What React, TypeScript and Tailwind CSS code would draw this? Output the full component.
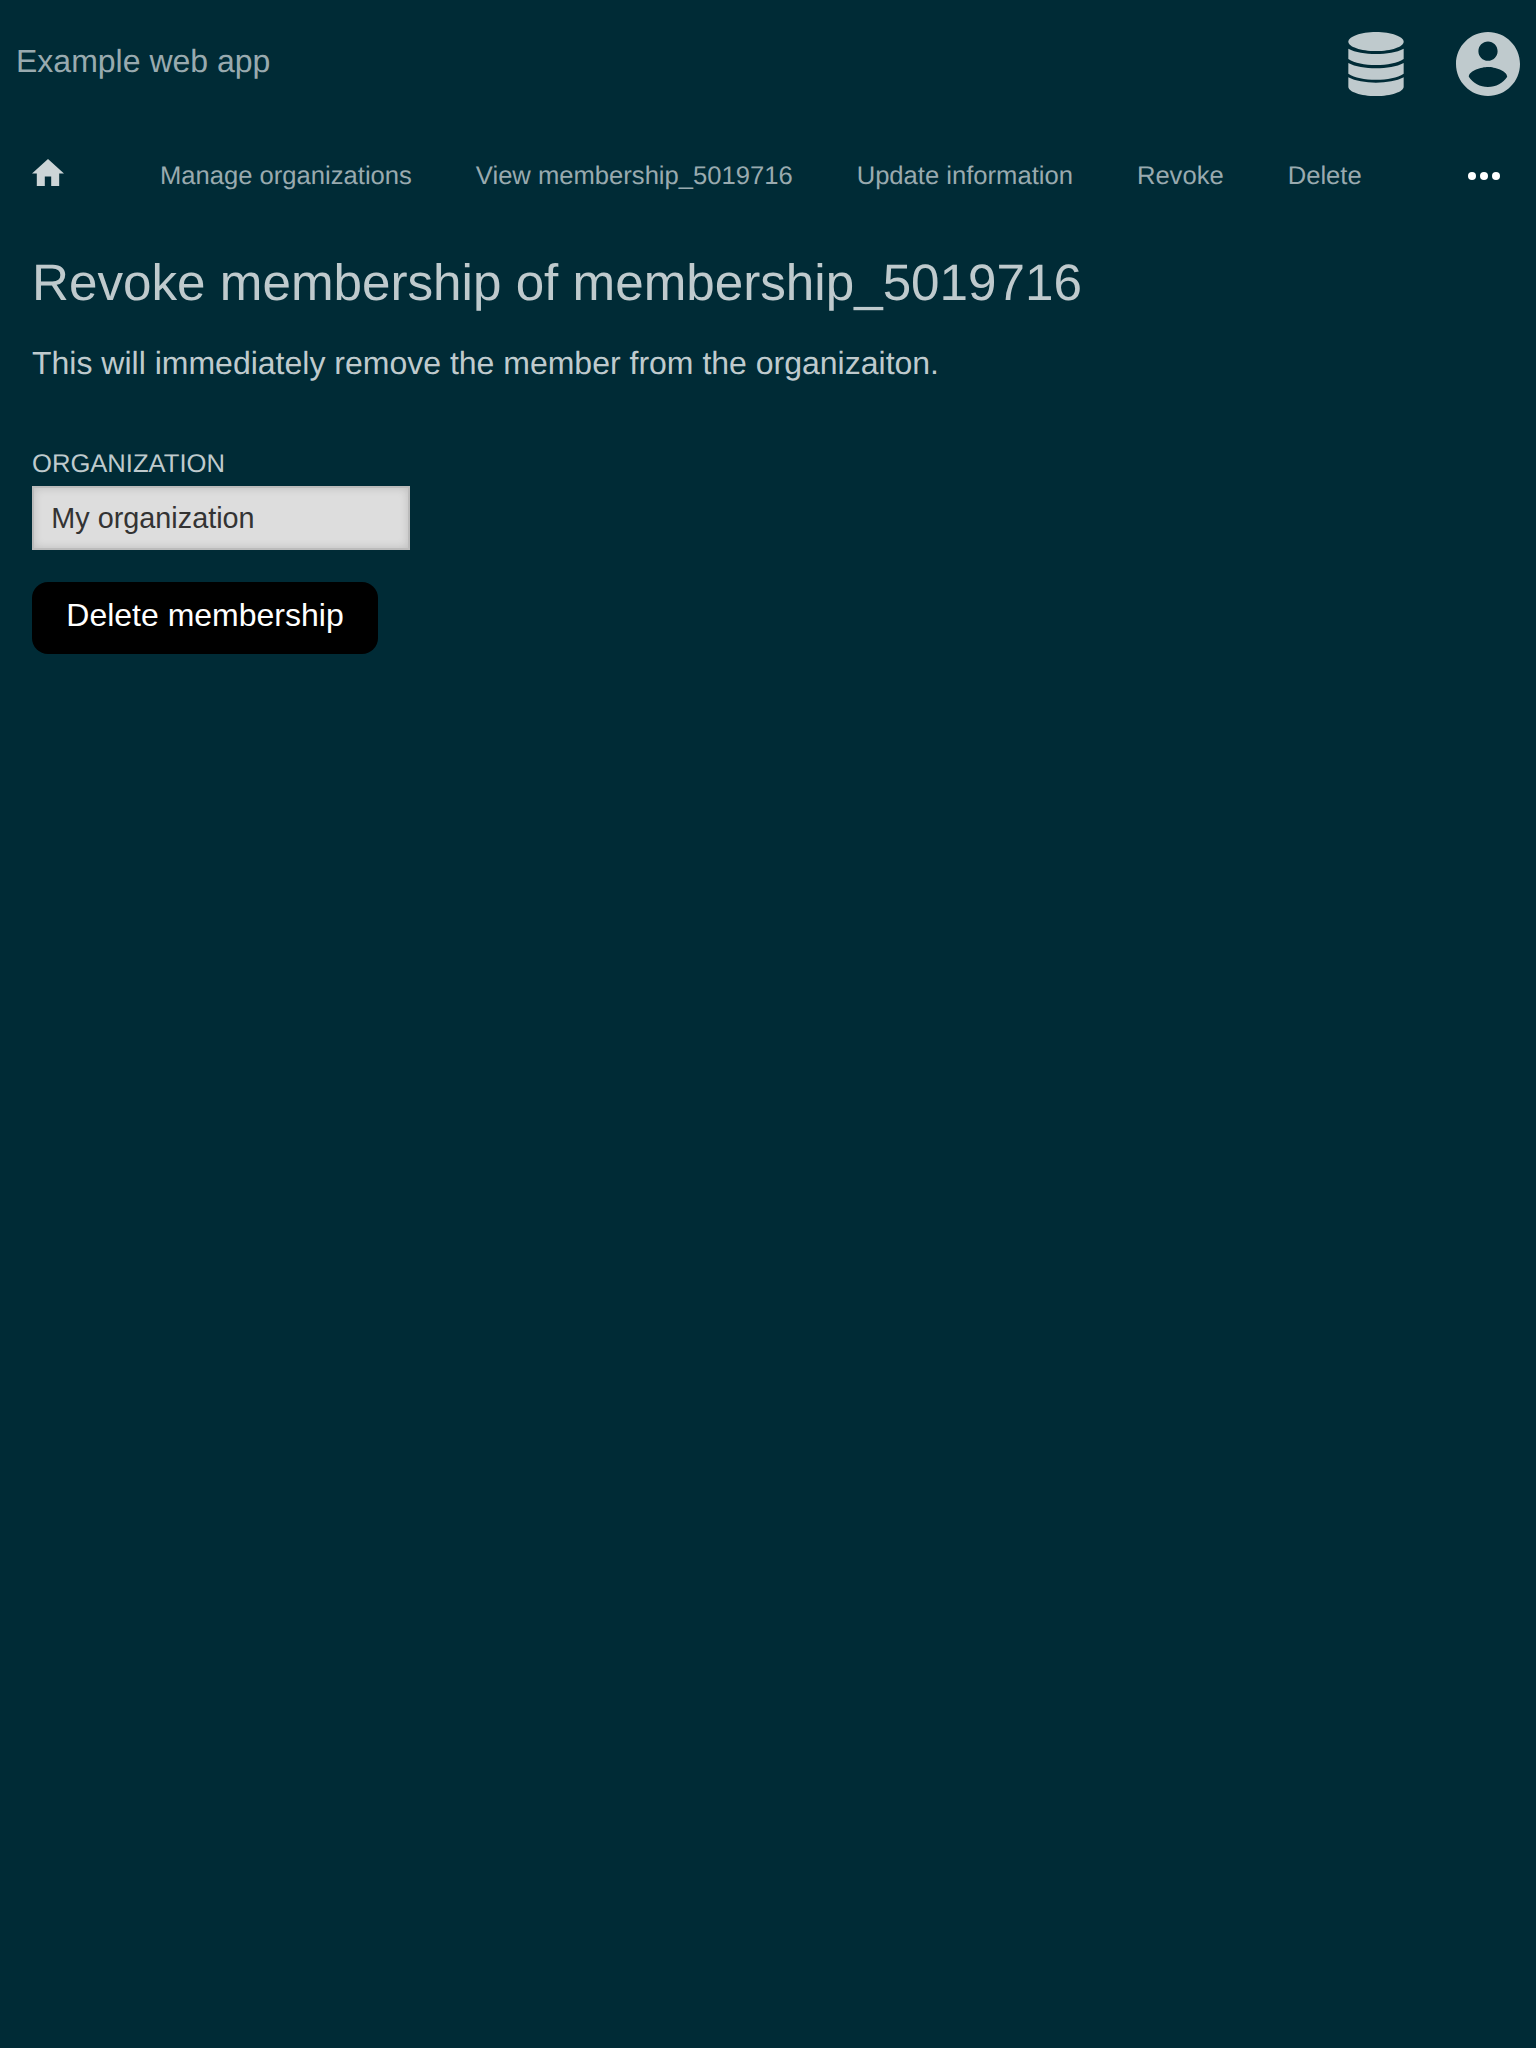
const navItems = [
  "Manage organizations",
  "View membership_5019716",
  "Update information",
  "Revoke",
  "Delete",
];

function DatabaseIcon() {
  return (
    <svg className="h-16 w-14" viewBox="0 0 168 192" fill="currentColor" aria-hidden="true">
      <path d="M84 0C130 0 167 14 167 29C167 44 130 57 84 57C38 57 1 44 1 29C1 14 38 0 84 0Z" />
      <path d="M1 50C22 61 52 66 84 66C116 66 146 61 167 50V81C148 93 118 99 84 99C50 99 20 93 1 81Z" />
      <path d="M1 93C22 104 52 109 84 109C116 109 146 104 167 93V125C148 137 118 143 84 143C50 143 20 137 1 125Z" />
      <path d="M1 136C22 147 52 152 84 152C116 152 146 147 167 136V164C167 179 130 192 84 192C38 192 1 179 1 164Z" />
    </svg>
  );
}

function AccountIcon() {
  return (
    <svg className="size-16" viewBox="2 2 20 20" fill="currentColor" aria-hidden="true">
      <path d="M12 2C6.48 2 2 6.48 2 12s4.48 10 10 10 10-4.48 10-10S17.52 2 12 2zm0 3c1.66 0 3 1.34 3 3s-1.34 3-3 3-3-1.34-3-3 1.34-3 3-3zm0 14.2c-2.5 0-4.71-1.28-6-3.22.03-1.99 4-3.08 6-3.08 1.99 0 5.97 1.09 6 3.08-1.29 1.94-3.5 3.22-6 3.22z" />
    </svg>
  );
}

function HomeIcon() {
  return (
    <svg className="h-[27.2px] w-8" viewBox="2 3 20 17" fill="currentColor" aria-hidden="true">
      <path d="M10 20v-6h4v6h5v-8h3L12 3 2 12h3v8z" />
    </svg>
  );
}

function MoreIcon() {
  return (
    <svg className="h-2 w-8" viewBox="0 0 16 4" fill="currentColor" aria-hidden="true">
      <circle cx="2" cy="2" r="2" />
      <circle cx="8" cy="2" r="2" />
      <circle cx="14" cy="2" r="2" />
    </svg>
  );
}

export default function App() {
  return (
    <div className="min-h-[2048px] bg-[#002b36] font-['Liberation_Sans',Arial,sans-serif] text-[#bfcacd] [text-rendering:geometricPrecision]">
      <header className="flex h-32 items-center justify-between px-4">
        <a className="pb-1.5 text-[32px] leading-[38px] text-[#99aaaf]">Example web app</a>
        <div className="flex items-center gap-[52px]">
          <DatabaseIcon />
          <AccountIcon />
        </div>
      </header>

      <nav className="flex h-24 items-center pr-9 pl-8 text-[25.6px] leading-8 text-[#99aaaf]">
        <a className="mr-24 pb-[7px] text-[#ccd5d7]" aria-label="Home">
          <HomeIcon />
        </a>
        <ul className="flex flex-1 gap-16">
          {navItems.map((item) => (
            <li key={item}>
              <a>{item}</a>
            </li>
          ))}
        </ul>
        <button className="text-white" aria-label="More">
          <MoreIcon />
        </button>
      </nav>

      <main className="px-8 pt-[29px]">
        <h1 className="text-[51.2px] leading-[60px]">Revoke membership of membership_5019716</h1>
        <p className="mt-[31px] text-[32px] leading-[38px]">
          This will immediately remove the member from the organizaiton.
        </p>
        <form className="mt-[66px] flex flex-col items-start">
          <label htmlFor="organization" className="text-[25.6px] leading-8 uppercase">
            Organization
          </label>
          <input
            id="organization"
            readOnly
            value="My organization"
            className="mt-1.5 h-16 w-[378px] border-2 border-[#bbbbbb] bg-[#dddddd] px-[17.3px] text-[28.8px] text-[#333333] shadow-[inset_0_0_8px_rgba(0,0,0,0.15)] outline-none"
          />
          <button
            type="button"
            className="mt-8 h-[72px] w-[346px] rounded-2xl bg-black pb-1.5 text-[32px] leading-[38px] text-white"
          >
            Delete membership
          </button>
        </form>
      </main>
    </div>
  );
}
